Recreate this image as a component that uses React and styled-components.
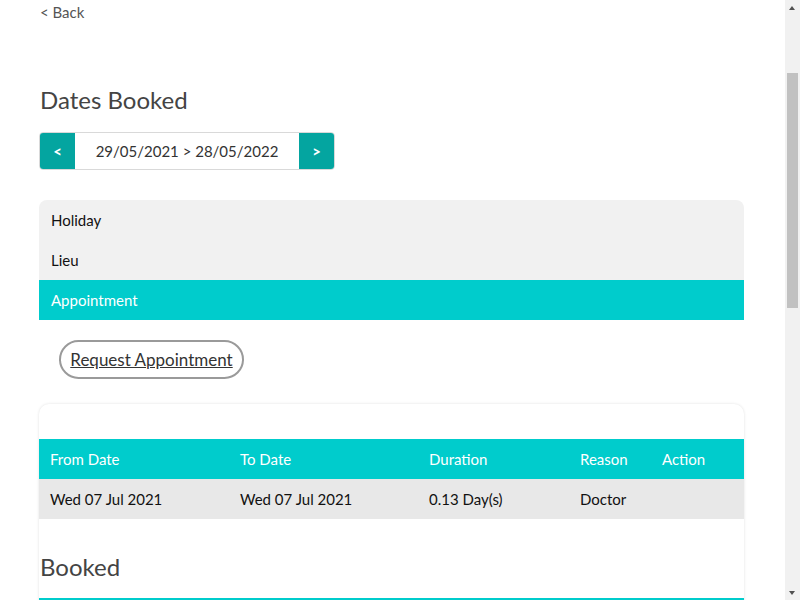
import React, { useLayoutEffect } from "react";
import styled, { createGlobalStyle } from "styled-components";

const Global = createGlobalStyle`
  html { overflow-y: scroll; scrollbar-width: none; }
  html::-webkit-scrollbar { display: none; }
  body {
    margin: 0;
    background: #fff;
    font-family: Lato, "Liberation Sans", sans-serif;
    color: #333;
  }
`;

const Page = styled.div`
  min-height: 1455px;
  box-sizing: border-box;
  padding: 148px 56px 0 39px;
`;

const BackLink = styled.a`
  display: block;
  height: 24px;
  line-height: 24px;
  padding-left: 1px;
  font-size: 15px;
  color: #555;
  text-decoration: none;
`;

const Heading = styled.h2`
  margin: ${(p) => p.$top || 0}px 0 0 1px;
  height: 36px;
  line-height: 36px;
  font-size: 24px;
  font-weight: 400;
  color: #444;
`;

const DateNav = styled.div`
  margin-top: 14px;
  display: flex;
  width: 296px;
  height: 38px;
  box-sizing: border-box;
  border: 1px solid #d9d9d9;
  border-radius: 4px;
  overflow: hidden;
`;

const NavButton = styled.button`
  width: 35px;
  border: 0;
  padding: 0;
  background: #04a5a0;
  color: #fff;
  font-family: inherit;
  font-size: 15px;
  font-weight: 700;
`;

const NavRange = styled.div`
  flex: 1;
  display: flex;
  align-items: center;
  justify-content: center;
  font-size: 15px;
  color: #333;
  background: #fff;
`;

const Tabs = styled.div`
  margin-top: 30px;
  background: #f1f1f1;
  border-radius: 8px 8px 0 0;
  overflow: hidden;
`;

const Tab = styled.div`
  height: 40px;
  line-height: 40px;
  padding-left: 12px;
  font-size: 15px;
  color: ${(p) => (p.$active ? "#fff" : "#111")};
  background: ${(p) => (p.$active ? "#00cccc" : "transparent")};
`;

const RequestButton = styled.button`
  margin: 20px 0 0 20px;
  height: 39px;
  width: 185px;
  padding: 0;
  border: 2px solid #9a9a9a;
  border-radius: 20px;
  background: #fff;
  font-family: inherit;
  font-size: 17px;
  color: #333;
  text-decoration: underline;
`;

const Card = styled.div`
  margin-top: 25px;
  background: #fff;
  border-radius: 10px;
  box-shadow: 0 0 3px rgba(0, 0, 0, 0.12);
  padding-top: 35px;
  min-height: 600px;
`;

const Row = styled.div`
  display: grid;
  grid-template-columns: 190px 189px 151px 82px 1fr;
  height: 40px;
  align-items: center;
  font-size: 15px;
  background: ${(p) => (p.$head ? "#00cccc" : "#e8e8e8")};
  color: ${(p) => (p.$head ? "#fff" : "#111")};
`;

const Cell = styled.div`
  padding-left: 11px;
  white-space: nowrap;
`;

const Spacer = styled.div`
  height: ${(p) => p.$h}px;
`;

const Scrollbar = styled.div`
  position: fixed;
  top: 0;
  right: 0;
  width: 15px;
  height: 100vh;
  background: #f1f1f1;
`;

const Thumb = styled.div`
  position: absolute;
  left: 2px;
  right: 2px;
  top: 73px;
  height: 235px;
  background: #c1c1c1;
`;

const Arrow = styled.div`
  position: absolute;
  left: 4px;
  width: 0;
  height: 0;
  border-left: 3.5px solid transparent;
  border-right: 3.5px solid transparent;
  ${(p) =>
    p.$down
      ? "bottom: 5px; border-top: 4px solid #505050;"
      : "top: 6px; border-bottom: 4px solid #505050;"}
`;

const columns = ["From Date", "To Date", "Duration", "Reason", "Action"];
const rows = [["Wed 07 Jul 2021", "Wed 07 Jul 2021", "0.13 Day(s)", "Doctor", ""]];

const Table = ({ data, labels = true }) => (
  <div>
    <Row $head>
      {columns.map((c) => (
        <Cell key={c}>{labels ? c : ""}</Cell>
      ))}
    </Row>
    {data.map((r, i) => (
      <Row key={i}>
        {r.map((c, j) => (
          <Cell key={j}>{c}</Cell>
        ))}
      </Row>
    ))}
  </div>
);

const App = () => {
  useLayoutEffect(() => {
    window.scrollTo(0, 148);
  }, []);

  return (
    <>
      <Global />
      <Page>
        <BackLink href="#">&lt; Back</BackLink>
        <Heading $top={58}>Dates Booked</Heading>
        <DateNav>
          <NavButton>&lt;</NavButton>
          <NavRange>29/05/2021 &gt; 28/05/2022</NavRange>
          <NavButton>&gt;</NavButton>
        </DateNav>
        <Tabs>
          <Tab>Holiday</Tab>
          <Tab>Lieu</Tab>
          <Tab $active>Appointment</Tab>
        </Tabs>
        <RequestButton>Request Appointment</RequestButton>
        <Card>
          <Table data={rows} />
          <Heading $top={30}>Booked</Heading>
          <Spacer $h={13} />
          <Table data={[]} labels={false} />
        </Card>
      </Page>
      <Scrollbar>
        <Arrow />
        <Thumb />
        <Arrow $down />
      </Scrollbar>
    </>
  );
};

export default App;
